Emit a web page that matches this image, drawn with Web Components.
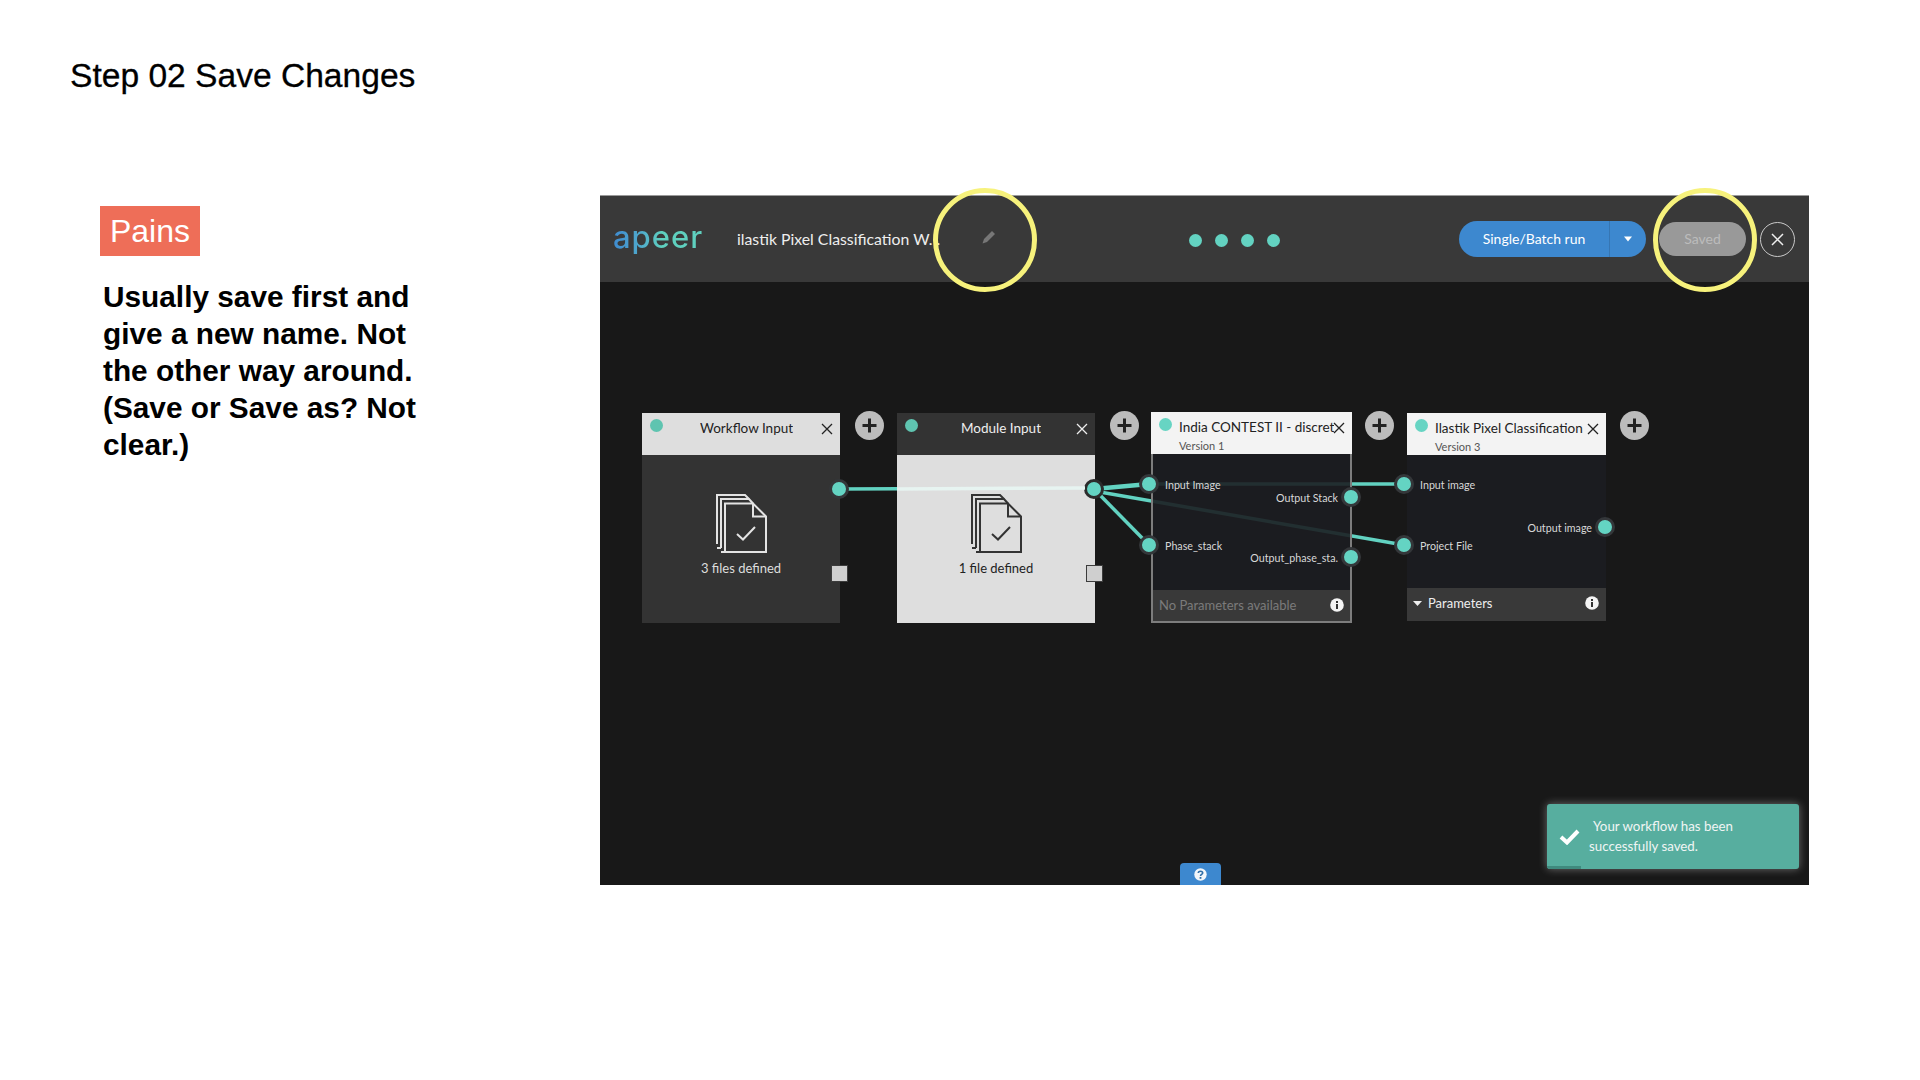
<!DOCTYPE html>
<html lang="en">
<head>
<meta charset="utf-8">
<title>Step 02 Save Changes</title>
<style>
    html, body { margin: 0; background: #fff; }
    body { font-family: "Liberation Sans", Arial, sans-serif; }
</style>
</head>
<body>
<slide-page>
    <span slot="heading">Step 02 Save Changes</span>
    <pain-note slot="aside" label="Pains">Usually save first and give a new name. Not the other way around. (Save or Save as? Not clear.)</pain-note>
    <app-shell slot="main">
        <app-header slot="header" title-text="ilastik Pixel Classification W. ."></app-header>

        <wire-layer></wire-layer>

        <flow-node x="642" y="413" w="198" h="210" theme="input" name="Workflow Input" summary="3 files defined" name-left="58">
            <flow-port cx="197" cy="76"></flow-port>
            <stop-square cx="197" cy="160"></stop-square>
        </flow-node>
        <add-button cx="869" cy="425"></add-button>

        <flow-node x="897" y="413" w="198" h="210" theme="input inverted" name="Module Input" summary="1 file defined" name-left="64">
            <flow-port cx="197" cy="76" ring="#2c2c2c"></flow-port>
            <stop-square cx="197" cy="160"></stop-square>
        </flow-node>
        <add-button cx="1124" cy="425"></add-button>

        <flow-node x="1151" y="412" w="201" h="211" theme="module selected" name="India CONTEST II - discretization" version="Version 1" note="No Parameters available">
            <flow-port cx="-2" cy="72" label="Input Image"></flow-port>
            <flow-port cx="-2" cy="133" label="Phase_stack"></flow-port>
            <flow-port cx="200" cy="85" label="Output Stack" side="right"></flow-port>
            <flow-port cx="200" cy="145" label="Output_phase_sta." side="right"></flow-port>
        </flow-node>
        <add-button cx="1379" cy="425"></add-button>

        <flow-node x="1407" y="413" w="199" h="208" theme="module" name="Ilastik Pixel Classification" version="Version 3" params="Parameters">
            <flow-port cx="-3" cy="71" label="Input image"></flow-port>
            <flow-port cx="-3" cy="132" label="Project File"></flow-port>
            <flow-port cx="198" cy="114" label="Output image" side="right"></flow-port>
        </flow-node>
        <add-button cx="1634" cy="425"></add-button>

        <wire-layer top></wire-layer>

        <toast-note>
            <span>Your workflow has been</span>
            <span>successfully saved.</span>
        </toast-note>
        <help-tab></help-tab>
    </app-shell>
</slide-page>

<script>
// every canvas coordinate below is a page coordinate, this is where the canvas starts
const CANVAS_X = 600;
const CANVAS_Y = 282;
const UI_FONT = 'Lato, "Open Sans", sans-serif';

class SlidePage extends HTMLElement {
    constructor() {
        super();
        this.attachShadow({ mode: "open" });
        this.shadowRoot.innerHTML = `
            <style>
                :host {
                    display: block;
                    width: 1920px;
                    height: 1080px;
                    overflow: hidden;
                    background: #fff;
                    color: #000;
                    font-family: "Liberation Sans", Arial, sans-serif;
                }
                h1 {
                    margin: 0;
                    padding: 55px 0 0 70px;
                    height: 195px;
                    box-sizing: border-box;
                    font-size: 33.6px;
                    line-height: 42px;
                    font-weight: 400;
                    -webkit-text-stroke: 0.3px #000;
                }
                .row {
                    display: grid;
                    grid-template-columns: 600px 1209px;
                }
            </style>
            <h1><slot name="heading"></slot></h1>
            <div class="row">
                <slot name="aside"></slot>
                <slot name="main"></slot>
            </div>
        `;
    }
}

class PainNote extends HTMLElement {
    constructor() {
        super();
        this.attachShadow({ mode: "open" });
    }

    connectedCallback() {
        const label = this.getAttribute("label") || "";
        this.shadowRoot.innerHTML = `
            <style>
                :host {
                    display: block;
                    padding: 11px 0 0 100px;
                }
                .tag {
                    display: flex;
                    align-items: center;
                    justify-content: center;
                    width: 100px;
                    height: 50px;
                    background: #ee6e58;
                    color: #fff;
                    font-size: 32px;
                }
                p {
                    margin: 22px 0 0 3px;
                    width: 330px;
                    font-size: 29.8px;
                    line-height: 37px;
                    font-weight: 700;
                }
            </style>
            <div class="tag">${label}</div>
            <p><slot></slot></p>
        `;
    }
}

class AppShell extends HTMLElement {
    constructor() {
        super();
        this.attachShadow({ mode: "open" });
        this.shadowRoot.innerHTML = `
            <style>
                :host {
                    display: flex;
                    flex-direction: column;
                    height: 689px;
                    border-top: 1px solid #9a9a9a;
                    background: #181818;
                    font-family: ${UI_FONT};
                }
                .canvas {
                    position: relative;
                    flex: 1;
                }
            </style>
            <slot name="header"></slot>
            <div class="canvas"><slot></slot></div>
        `;
    }
}

class AppHeader extends HTMLElement {
    constructor() {
        super();
        this.attachShadow({ mode: "open" });
    }

    connectedCallback() {
        const title = this.getAttribute("title-text") || "";
        this.shadowRoot.innerHTML = `
            <style>
                :host {
                    display: flex;
                    align-items: center;
                    position: relative;
                    height: 86px;
                    padding-left: 13px;
                    box-sizing: border-box;
                    background: #393939;
                    color: #eee;
                }
                .logo {
                    width: 89px;
                    margin-top: -5px;
                    font-family: Inter, sans-serif;
                    font-weight: 500;
                    font-size: 31px;
                    line-height: 44px;
                    letter-spacing: 1px;
                    background: linear-gradient(90deg, #3f8bd0 0%, #4fa9cc 30%, #5fd0bf 55%);
                    -webkit-background-clip: text;
                    background-clip: text;
                    color: transparent;
                }
                .title {
                    width: 210px;
                    margin-left: 35px;
                    margin-top: -2px;
                    font-size: 15.8px;
                    white-space: nowrap;
                }
                .pencil { margin-left: 35px; margin-top: -5px; }
                .dots {
                    display: flex;
                    gap: 13px;
                    margin-left: 193px;
                    margin-top: 2px;
                }
                .dots i {
                    width: 13px;
                    height: 13px;
                    border-radius: 50%;
                    background: #63d2c1;
                }
                .run {
                    display: flex;
                    height: 36px;
                    margin-left: 179px;
                    border-radius: 18px;
                    background: #3d88cf;
                    color: #fff;
                    font-size: 14px;
                    line-height: 35px;
                }
                .run span { width: 150px; text-align: center; }
                .run b {
                    display: flex;
                    align-items: center;
                    justify-content: center;
                    width: 37px;
                    border-left: 1px solid #3676b3;
                    box-sizing: border-box;
                }
                .saved {
                    width: 87px;
                    height: 34px;
                    margin-left: 13px;
                    border-radius: 17px;
                    background: #999;
                    color: #bcbcbc;
                    font-size: 14px;
                    line-height: 33px;
                    text-align: center;
                }
                .close {
                    display: flex;
                    align-items: center;
                    justify-content: center;
                    width: 35px;
                    height: 35px;
                    margin-left: 14px;
                    border: 1px solid #c9c9c9;
                    border-radius: 50%;
                    box-sizing: border-box;
                }
                .ring {
                    position: absolute;
                    top: -8px;
                    width: 104px;
                    height: 104px;
                    border: 5px solid #f7f27c;
                    border-radius: 50%;
                    box-sizing: border-box;
                }
            </style>
            <div class="logo">apeer</div>
            <div class="title">${title}</div>
            <svg class="pencil" width="14" height="14" viewBox="0 0 14 14">
                <path d="M0.5 13.5 L2 9 L10 1 L13 4 L5 12 Z" fill="#777"/>
            </svg>
            <div class="dots"><i></i><i></i><i></i><i></i></div>
            <div class="run">
                <span>Single/Batch run</span>
                <b><svg width="10" height="6" viewBox="0 0 10 6"><path d="M1 0.5 H9 L5 5.5 Z" fill="#fff"/></svg></b>
            </div>
            <div class="saved">Saved</div>
            <div class="close">
                <svg width="13" height="13" viewBox="0 0 13 13"><path d="M1 1 L12 12 M12 1 L1 12" stroke="#eee" stroke-width="1.5"/></svg>
            </div>
            <div class="ring" style="left:333px"></div>
            <div class="ring" style="left:1053px"></div>
        `;
    }
}

// the connections, drawn once under the nodes, the "top" one only has the part that shows over Module Input
class WireLayer extends HTMLElement {
    constructor() {
        super();
        this.attachShadow({ mode: "open" });
    }

    connectedCallback() {
        const lines = this.hasAttribute("top")
            ? `<line x1="897" y1="489" x2="1085" y2="488" stroke="#e7f4f1" stroke-width="3.5"/>`
            : `
                <g stroke="#62d2c1" stroke-width="3.5" fill="none">
                    <line x1="839" y1="489" x2="1094" y2="488"/>
                    <line x1="1094" y1="489" x2="1149" y2="484" stroke-width="4.5"/>
                    <line x1="1094" y1="489" x2="1149" y2="545"/>
                    <line x1="1094" y1="491" x2="1404" y2="545"/>
                    <line x1="1149" y1="484" x2="1404" y2="484"/>
                </g>
            `;
        this.shadowRoot.innerHTML = `
            <style>
                :host { position: absolute; inset: 0; pointer-events: none; }
                svg { display: block; }
            </style>
            <svg width="1208" height="603" viewBox="${CANVAS_X} ${CANVAS_Y} 1208 603">${lines}</svg>
        `;
    }
}

class FlowNode extends HTMLElement {
    constructor() {
        super();
        this.attachShadow({ mode: "open" });
    }

    connectedCallback() {
        const attr = (name) => this.getAttribute(name);
        const theme = (attr("theme") || "").split(" ");
        const inverted = theme.includes("inverted");
        const isInput = theme.includes("input");
        const selected = theme.includes("selected");

        const headBg = isInput ? (inverted ? "#333" : "#dedede") : "#f3f3f3";
        const headFg = isInput && inverted ? "#eee" : "#222";
        const bodyBg = isInput ? (inverted ? "#dedede" : "#333") : "rgba(28, 29, 33, 0.9)";
        const bodyFg = inverted ? "#222" : "#ddd";
        const docColor = inverted ? "#333" : "#e4e4e4";
        const dot = isInput ? "#5fc4b0" : "#67d4c3";

        let content = "";
        if (isInput) {
            content = `
                <svg class="doc" width="52" height="60" viewBox="0 0 52 60" fill="none" stroke="${docColor}" stroke-width="2">
                    <path d="M1 50 V1 H29 L33 5"/>
                    <path d="M5 54 H1 M5 54 V5 H33 L37 9.5"/>
                    <path d="M9 58 H5 M9 58 V9.5 H37 L50 22.5 V58 Z"/>
                    <path d="M37 9.5 V22.5 H50"/>
                    <path d="M21 40 L27 45.5 L39 33"/>
                </svg>
                <div class="summary">${attr("summary")}</div>
            `;
        }

        let foot = "";
        if (attr("note")) {
            foot = `<div class="foot muted"><span>${attr("note")}</span>${FlowNode.info()}</div>`;
        } else if (attr("params")) {
            foot = `
                <div class="foot">
                    <svg width="9" height="5" viewBox="0 0 9 5"><path d="M0 0 H9 L4.5 5 Z" fill="#eee"/></svg>
                    <span class="params">${attr("params")}</span>${FlowNode.info()}
                </div>
            `;
        }

        const nameStyle = attr("name-left")
            ? `left:${attr("name-left")}px;top:5px;`
            : `left:28px;top:5px;max-width:${selected ? 155 : 160}px;`;

        this.shadowRoot.innerHTML = `
            <style>
                :host {
                    position: absolute;
                    left: ${attr("x") - CANVAS_X}px;
                    top: ${attr("y") - CANVAS_Y}px;
                    width: ${attr("w")}px;
                    height: ${attr("h")}px;
                    box-sizing: border-box;
                    display: flex;
                    flex-direction: column;
                    ${selected ? "outline: 2px solid #7d7d7d; outline-offset: -2px;" : ""}
                }
                .head {
                    position: relative;
                    flex: 0 0 42px;
                    background: ${headBg};
                    color: ${headFg};
                }
                .dot {
                    position: absolute;
                    left: 8px;
                    top: 6px;
                    width: 13px;
                    height: 13px;
                    border-radius: 50%;
                    background: ${dot};
                }
                .name {
                    position: absolute;
                    font-size: 13.5px;
                    line-height: 20px;
                    white-space: nowrap;
                    overflow: hidden;
                }
                .version {
                    position: absolute;
                    left: 28px;
                    top: 26px;
                    font-size: 11px;
                    line-height: 15px;
                    color: #555;
                }
                .x {
                    position: absolute;
                    right: 7px;
                    top: 10px;
                }
                .body {
                    flex: 1;
                    display: flex;
                    flex-direction: column;
                    align-items: center;
                    padding-top: 39px;
                    background: ${bodyBg};
                    color: ${bodyFg};
                }
                .summary {
                    margin-top: 5px;
                    font-size: 13px;
                    line-height: 18px;
                }
                .foot {
                    flex: 0 0 33px;
                    box-sizing: border-box;
                    display: flex;
                    align-items: center;
                    gap: 6px;
                    padding: 0 7px 3px 6px;
                    background: #393939;
                    color: #eee;
                    font-size: 13px;
                }
                .foot.muted { color: #7b7b7b; padding: 0 8px 4px 8px; }
                .foot svg:last-child { margin-left: auto; }
                .doc { display: block; margin-left: 2px; }
            </style>
            <div class="head">
                <div class="dot"></div>
                <div class="name" style="${nameStyle}">${attr("name")}</div>
                ${attr("version") ? `<div class="version">${attr("version")}</div>` : ""}
                <svg class="x" width="12" height="12" viewBox="0 0 12 12">
                    <path d="M1 1 L11 11 M11 1 L1 11" stroke="${headFg}" stroke-width="1.3"/>
                </svg>
            </div>
            <div class="body">${content}</div>
            ${foot}
            <slot></slot>
        `;
    }

    static info() {
        return `
            <svg width="14" height="14" viewBox="0 0 14 14">
                <circle cx="7" cy="7" r="6.8" fill="#f4f4f4"/>
                <rect x="6" y="6" width="2" height="5" fill="#333"/>
                <rect x="6" y="3" width="2" height="2" fill="#333"/>
            </svg>
        `;
    }
}

class FlowPort extends HTMLElement {
    constructor() {
        super();
        this.attachShadow({ mode: "open" });
    }

    connectedCallback() {
        const cx = Number(this.getAttribute("cx"));
        const cy = Number(this.getAttribute("cy"));
        const ring = this.getAttribute("ring") || "#34373a";
        const label = this.getAttribute("label") || "";
        const onRight = this.getAttribute("side") === "right";
        this.shadowRoot.innerHTML = `
            <style>
                :host {
                    position: absolute;
                    left: ${cx - 10}px;
                    top: ${cy - 10}px;
                    width: 20px;
                    height: 20px;
                }
                .dot {
                    width: 14px;
                    height: 14px;
                    border: 3px solid ${ring};
                    border-radius: 50%;
                    background: #64d4c3;
                }
                .label {
                    position: absolute;
                    top: 1px;
                    ${onRight ? "right: 23px;" : "left: 26px;"}
                    font-size: 10.7px;
                    line-height: 20px;
                    white-space: nowrap;
                    color: #d8d8d8;
                }
            </style>
            <div class="dot"></div>
            ${label ? `<div class="label">${label}</div>` : ""}
        `;
    }
}

class StopSquare extends HTMLElement {
    constructor() {
        super();
        this.attachShadow({ mode: "open" });
    }

    connectedCallback() {
        const cx = Number(this.getAttribute("cx"));
        const cy = Number(this.getAttribute("cy"));
        this.shadowRoot.innerHTML = `
            <style>
                :host {
                    position: absolute;
                    left: ${cx - 8.5}px;
                    top: ${cy - 8.5}px;
                    width: 17px;
                    height: 17px;
                    box-sizing: border-box;
                    border: 1.5px solid #3c3c3c;
                    background: #cfcfcf;
                }
            </style>
        `;
    }
}

class AddButton extends HTMLElement {
    constructor() {
        super();
        this.attachShadow({ mode: "open" });
    }

    connectedCallback() {
        const left = this.getAttribute("cx") - CANVAS_X - 14.5;
        const top = this.getAttribute("cy") - CANVAS_Y - 14.5;
        this.shadowRoot.innerHTML = `
            <style>
                :host {
                    position: absolute;
                    left: ${left}px;
                    top: ${top}px;
                    width: 29px;
                    height: 29px;
                }
                svg { display: block; }
            </style>
            <svg width="29" height="29" viewBox="0 0 29 29">
                <circle cx="14.5" cy="14.5" r="14.5" fill="#bcbcbc"/>
                <path d="M14.5 7.5 V21.5 M7.5 14.5 H21.5" stroke="#222" stroke-width="3"/>
            </svg>
        `;
    }
}

class ToastNote extends HTMLElement {
    constructor() {
        super();
        this.attachShadow({ mode: "open" });
        this.shadowRoot.innerHTML = `
            <style>
                :host {
                    position: absolute;
                    left: 947px;
                    top: 522px;
                    width: 252px;
                    height: 65px;
                    box-sizing: border-box;
                    padding: 12px 0 0 42px;
                    display: flex;
                    flex-direction: column;
                    border-radius: 3px;
                    background: #57ae9f;
                    box-shadow: 0 0 9px rgba(255, 255, 255, 0.38);
                    color: #f0f5f4;
                    font-size: 13.3px;
                    line-height: 20px;
                }
                ::slotted(span:first-child) { margin-left: 4px; }
                .check { position: absolute; left: 12px; top: 25px; }
                .bar {
                    position: absolute;
                    left: 0;
                    bottom: 0;
                    width: 34px;
                    height: 3px;
                    background: #3f8a7e;
                    border-bottom-left-radius: 3px;
                }
            </style>
            <svg class="check" width="21" height="16" viewBox="0 0 21 16">
                <path d="M2 8 L8 13.5 L19 2" fill="none" stroke="#fff" stroke-width="4"/>
            </svg>
            <slot></slot>
            <div class="bar"></div>
        `;
    }
}

class HelpTab extends HTMLElement {
    constructor() {
        super();
        this.attachShadow({ mode: "open" });
        this.shadowRoot.innerHTML = `
            <style>
                :host {
                    position: absolute;
                    left: 580px;
                    bottom: 0;
                    width: 41px;
                    height: 22px;
                    display: flex;
                    align-items: center;
                    justify-content: center;
                    border-radius: 4px 4px 0 0;
                    background: #3d88cf;
                }
            </style>
            <svg width="13" height="13" viewBox="0 0 13 13">
                <circle cx="6.5" cy="6.5" r="6.2" fill="#f2f6fa"/>
                <path d="M4.3 5 C4.3 2.6 8.7 2.6 8.7 5 C8.7 6.5 6.5 6.4 6.5 8" fill="none" stroke="#2f6ea8" stroke-width="1.6"/>
                <rect x="5.6" y="9" width="1.8" height="1.8" fill="#2f6ea8"/>
            </svg>
        `;
    }
}

customElements.define("slide-page", SlidePage);
customElements.define("pain-note", PainNote);
customElements.define("app-shell", AppShell);
customElements.define("app-header", AppHeader);
customElements.define("wire-layer", WireLayer);
customElements.define("flow-node", FlowNode);
customElements.define("flow-port", FlowPort);
customElements.define("stop-square", StopSquare);
customElements.define("add-button", AddButton);
customElements.define("toast-note", ToastNote);
customElements.define("help-tab", HelpTab);
</script>
</body>
</html>
